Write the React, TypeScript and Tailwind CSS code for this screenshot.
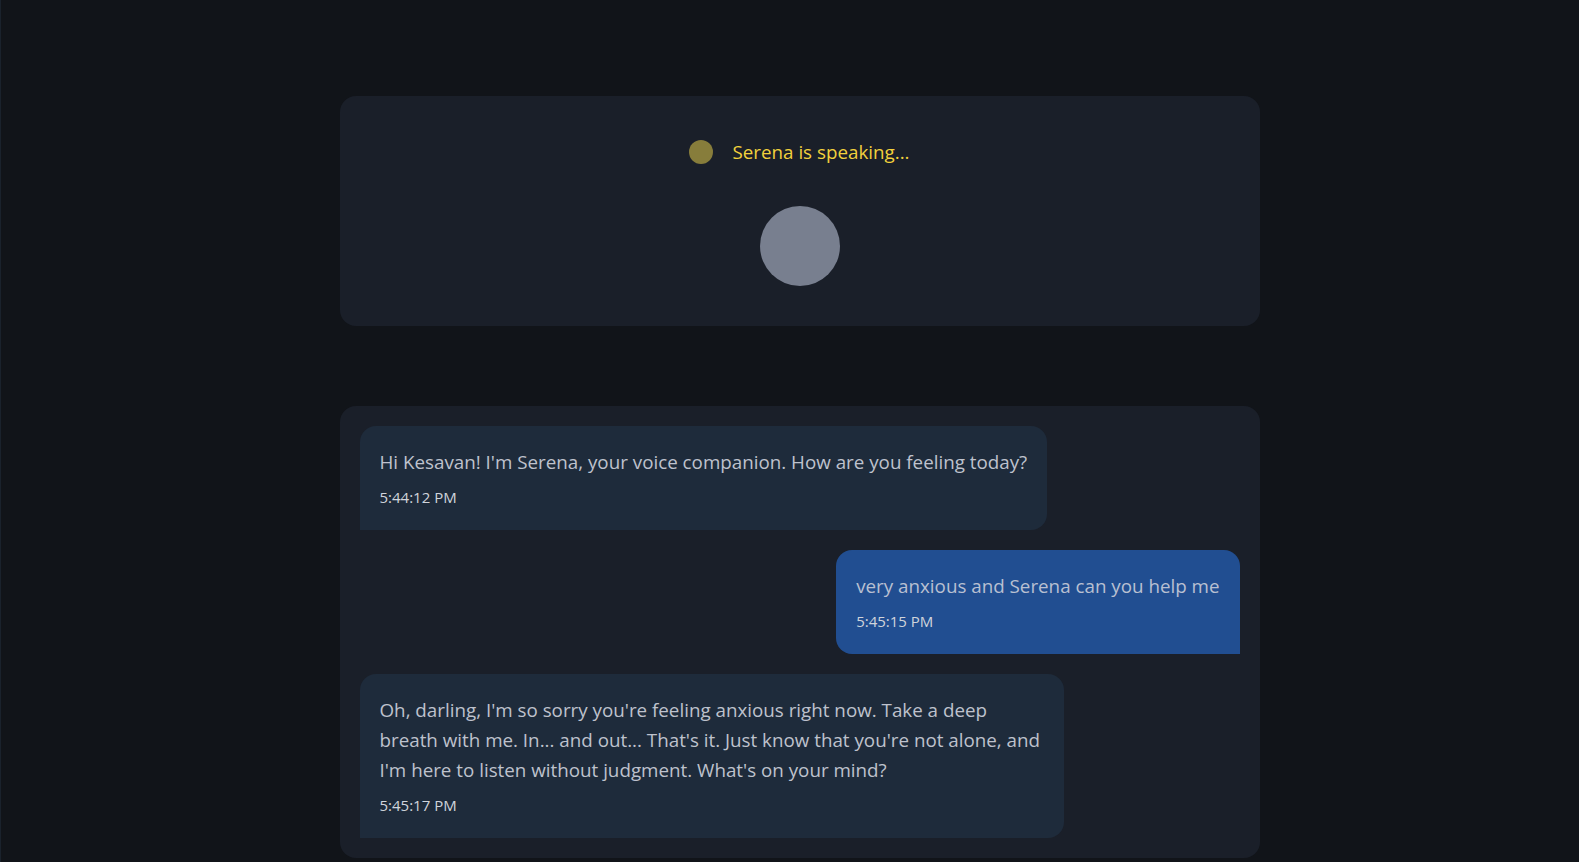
import React from "react";

type Msg = { role: "assistant" | "user"; text: string; time: string };

const messages: Msg[] = [
  {
    role: "assistant",
    text: "Hi Kesavan! I'm Serena, your voice companion. How are you feeling today?",
    time: "5:44:12 PM",
  },
  { role: "user", text: "very anxious and Serena can you help me", time: "5:45:15 PM" },
  {
    role: "assistant",
    text: "Oh, darling, I'm so sorry you're feeling anxious right now. Take a deep breath with me. In... and out... That's it. Just know that you're not alone, and I'm here to listen without judgment. What's on your mind?",
    time: "5:45:17 PM",
  },
];

function Bubble({ m }: { m: Msg }) {
  const isUser = m.role === "user";
  return (
    <div className={isUser ? "flex justify-end" : "flex justify-start"}>
      <div
        className={
          isUser
            ? "max-w-[80%] rounded-2xl rounded-br-none bg-[#214e91] px-5 pt-[21px] pb-[23px] text-[#b9c0d2]"
            : "max-w-[80%] rounded-2xl rounded-bl-none bg-[#1e2b3b] px-5 pt-[21px] pb-[23px] text-[#bec2cd]"
        }
      >
        <p className="text-[18.8px] leading-[30px]">{m.text}</p>
        <p className="mt-[10px] text-[15px] leading-5 text-[#d0d4db]">{m.time}</p>
      </div>
    </div>
  );
}

export default function App() {
  return (
    <div
      className="min-h-screen border-l border-[#1a222c] bg-[#111419] pl-[19px] pt-[96px]"
      style={{ fontFamily: '"Open Sans", "Noto Sans", sans-serif' }}
    >
      <div className="mx-auto w-[920px]">
        {/* voice status */}
        <div className="flex flex-col items-center rounded-2xl bg-[#1a1f29] px-10 pt-[42px] pb-10">
          <div className="flex h-[28px] items-center gap-[19px]">
            <span className="h-6 w-6 rounded-full bg-[#877d3b]" />
            <span className="text-[18.8px] leading-7 text-[#f2d13c]">Serena is speaking...</span>
          </div>
          <div className="mt-[40px] h-20 w-20 rounded-full bg-[#787f8f]" />
        </div>

        {/* transcript */}
        <div className="mt-20 flex flex-col gap-5 rounded-2xl bg-[#1a1f29] p-5">
          {messages.map((m, i) => (
            <Bubble key={i} m={m} />
          ))}
        </div>
      </div>
    </div>
  );
}
